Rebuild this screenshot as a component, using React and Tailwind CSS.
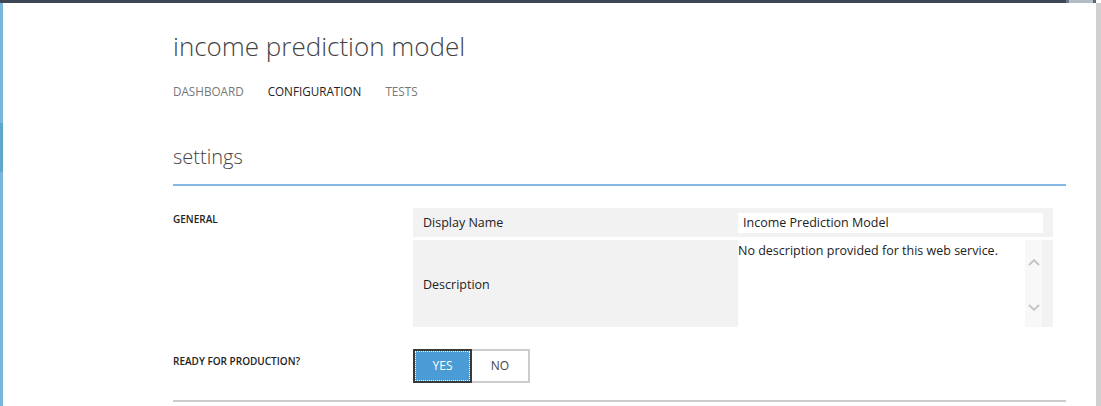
import React, { useState } from 'react';

const NAV = ['DASHBOARD', 'CONFIGURATION', 'TESTS'];

const App = () => {
  const [tab] = useState('CONFIGURATION');
  const [ready, setReady] = useState(true);

  return (
    <div className="w-[1101px] h-[406px] overflow-hidden bg-white flex flex-col font-['Open_Sans',sans-serif] text-[#222]">
      {/* top strip */}
      <div className="h-[3px] flex shrink-0">
        <div className="w-[1066px] bg-[#3d4654]"></div>
        <div className="w-[3px] bg-[#6b7584]"></div>
        <div className="w-[24px] bg-[#b4bcc4]"></div>
        <div className="w-[3px] bg-[#5d6674]"></div>
        <div className="flex-1 bg-white"></div>
      </div>

      <div className="flex flex-1 min-h-0">
        {/* left accent */}
        <div className="w-[3px] flex flex-col shrink-0">
          <div className="h-[120px] bg-[#79b6dc]"></div>
          <div className="h-[49px] bg-[#5da6cc]"></div>
          <div className="flex-1 bg-[#79b6dc]"></div>
        </div>

        <div className="w-[1093px] pl-[170px] pr-[30px]">
          <div className="pt-[26px]">
            <h1 className="text-[26px] leading-[34px] font-light text-[#444]">income prediction model</h1>
            <div className="mt-[20px] flex gap-[24px] text-[11.7px] leading-[16px]">
              {NAV.map(n => (
                <span key={n} className={n === tab ? 'text-[#222]' : 'text-[#777]'}>{n}</span>
              ))}
            </div>
          </div>

          <h2 className="mt-[44px] text-[20px] leading-[28px] font-light text-[#444]">settings</h2>
          <div className="mt-[13px] h-[2px] bg-[#84b7e1]"></div>

          <div className="pt-[22px] flex">
            <div className="w-[240px] pt-[3px] text-[10px] leading-[16px] font-semibold">GENERAL</div>
            <div className="w-[640px] flex flex-col gap-[3px] text-[12.5px]">
              <div className="h-[29px] flex bg-[#f2f2f2]">
                <div className="w-[325px] pl-[10px] pt-[2px] flex items-center">Display Name</div>
                <div className="flex-1 pt-[5px] pr-[10px]">
                  <div className="h-[20px] bg-white pl-[5px] flex items-center">Income Prediction Model</div>
                </div>
              </div>
              <div className="h-[87px] flex bg-[#f2f2f2]">
                <div className="w-[325px] pl-[10px] pt-[3px] flex items-center">Description</div>
                <div className="flex-1 pr-[11px] flex">
                  <div className="flex-1 bg-white pt-[2px] leading-[18px]">No description provided for this web service.</div>
                  <div className="w-[17px] bg-[#f8f8f8] flex flex-col items-center justify-between pt-[19px] pb-[16px]">
                    <svg width="12" height="7" viewBox="0 0 12 7"><path d="M1 6L6 1.2L11 6" fill="none" stroke="#c2c2c2" strokeWidth="1.8" /></svg>
                    <svg width="12" height="7" viewBox="0 0 12 7"><path d="M1 1L6 5.8L11 1" fill="none" stroke="#c2c2c2" strokeWidth="1.8" /></svg>
                  </div>
                </div>
              </div>
            </div>
          </div>

          <div className="mt-[22px] flex items-start">
            <div className="w-[240px] pt-[4px] text-[10px] leading-[16px] font-semibold">READY FOR PRODUCTION?</div>
            <div className="flex h-[34px] text-[12px]">
              <button
                onClick={() => setReady(true)}
                className={`w-[59px] border-2 flex items-center justify-center ${ready ? 'bg-[#4a9bd6] border-[#3a3a3a] text-white' : 'bg-white border-[#cccccc] text-[#444]'}`}
              >
                <span className={`w-full h-full flex items-center justify-center ${ready ? 'outline-1 outline-dotted outline-white -outline-offset-1' : ''}`}>YES</span>
              </button>
              <button
                onClick={() => setReady(false)}
                className={`w-[58px] border-2 border-l-0 flex items-center justify-center ${!ready ? 'bg-[#4a9bd6] border-[#3a3a3a] text-white' : 'bg-white border-[#cccccc] text-[#444]'}`}
              >
                NO
              </button>
            </div>
          </div>

          <div className="mt-[17px] h-[2px] bg-[#cccccc]"></div>
        </div>

        {/* scrollbar */}
        <div className="w-[5px] bg-[#d0d0d0] shrink-0"></div>
      </div>
    </div>
  );
};

export default App;
